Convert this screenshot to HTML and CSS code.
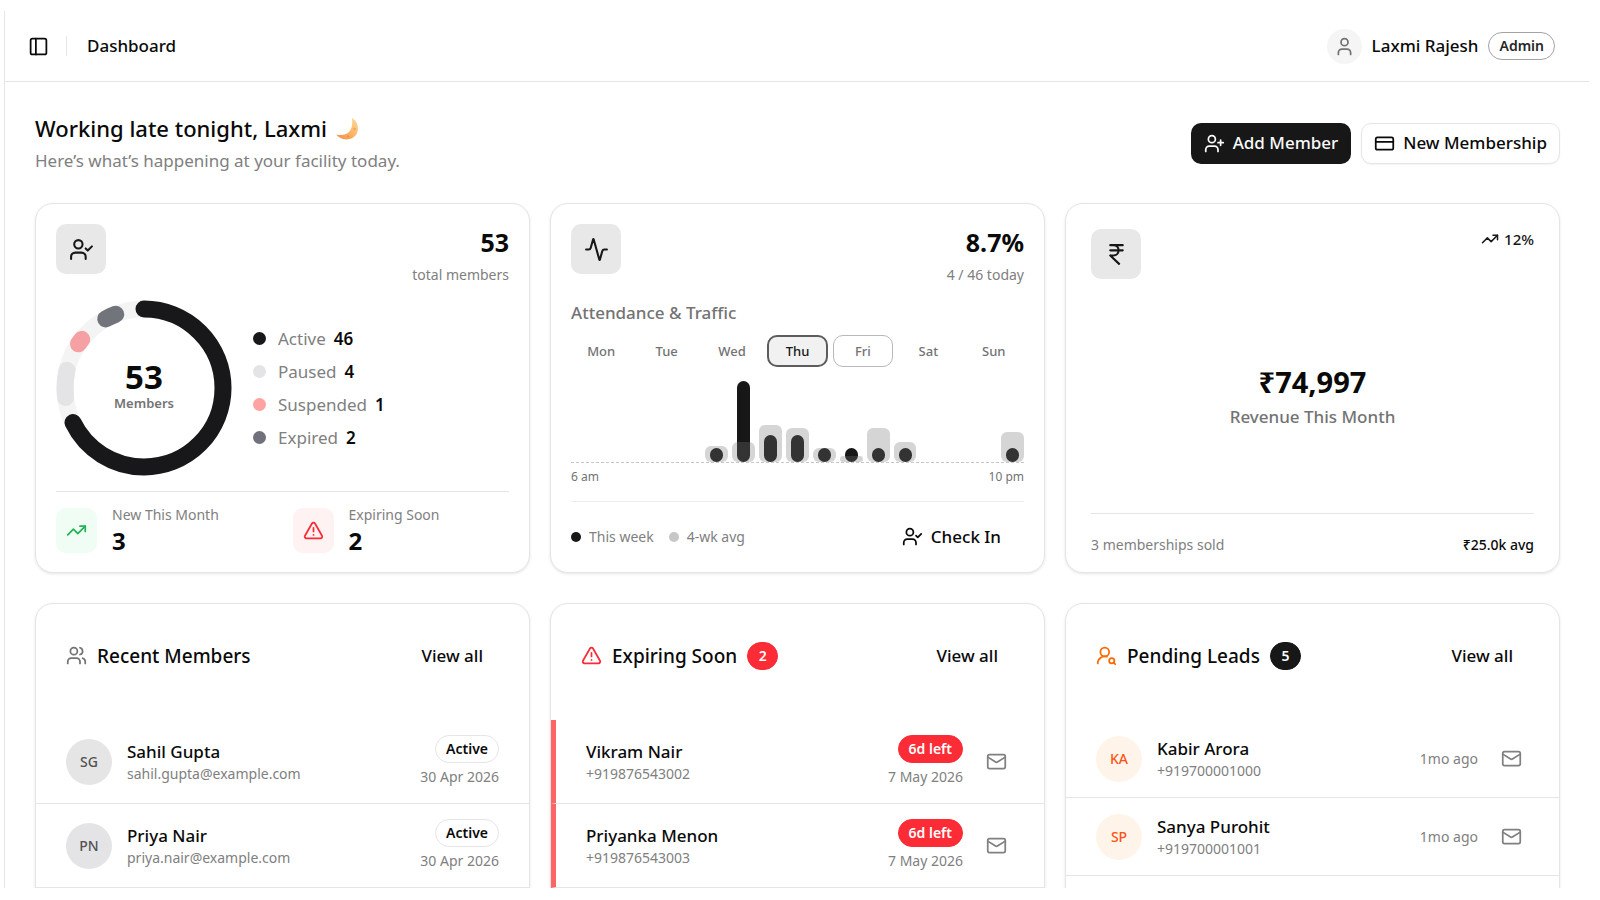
FILE: index.html
```html
<!DOCTYPE html>
<html lang="en">
<head>
    <meta charset="UTF-8">
    <meta name="viewport" content="width=device-width, initial-scale=1.0">
    <title>Dashboard</title>
    <link rel="stylesheet" href="styles.css">
</head>
<body>
    <!-- Icon sprite -->
    <svg class="sprite" aria-hidden="true">
        <symbol id="i-panel" viewBox="0 0 24 24"><rect x="3" y="3" width="18" height="18" rx="2"/><path d="M9 3v18"/></symbol>
        <symbol id="i-user" viewBox="0 0 24 24"><path d="M19 21v-2a4 4 0 0 0-4-4H9a4 4 0 0 0-4 4v2"/><circle cx="12" cy="7" r="4"/></symbol>
        <symbol id="i-user-plus" viewBox="0 0 24 24"><path d="M16 21v-2a4 4 0 0 0-4-4H6a4 4 0 0 0-4 4v2"/><circle cx="9" cy="7" r="4"/><path d="M19 8v6M22 11h-6"/></symbol>
        <symbol id="i-user-check" viewBox="0 0 24 24"><path d="M16 21v-2a4 4 0 0 0-4-4H6a4 4 0 0 0-4 4v2"/><circle cx="9" cy="7" r="4"/><path d="m16 11 2 2 4-4"/></symbol>
        <symbol id="i-user-search" viewBox="0 0 24 24"><circle cx="10" cy="8" r="5"/><path d="M2 21a8 8 0 0 1 10.434-7.62"/><circle cx="18" cy="18" r="3"/><path d="m22 22-1.9-1.9"/></symbol>
        <symbol id="i-users" viewBox="0 0 24 24"><path d="M16 21v-2a4 4 0 0 0-4-4H6a4 4 0 0 0-4 4v2"/><circle cx="9" cy="7" r="4"/><path d="M16 3.128a4 4 0 0 1 0 7.744M22 21v-2a4 4 0 0 0-3-3.87"/></symbol>
        <symbol id="i-card" viewBox="0 0 24 24"><rect x="2" y="5" width="20" height="14" rx="2"/><path d="M2 10h20"/></symbol>
        <symbol id="i-activity" viewBox="0 0 24 24"><path d="M22 12h-2.48a2 2 0 0 0-1.93 1.46l-2.35 8.36a.25.25 0 0 1-.48 0L9.24 2.18a.25.25 0 0 0-.48 0l-2.35 8.36A2 2 0 0 1 4.49 12H2"/></symbol>
        <symbol id="i-rupee" viewBox="0 0 24 24"><path d="M6 3h12M6 8h12M6 13l8.5 8M6 13h3M9 13c6.667 0 6.667-10 0-10"/></symbol>
        <symbol id="i-trend" viewBox="0 0 24 24"><path d="m22 7-8.5 8.5-5-5L2 17"/><path d="M16 7h6v6"/></symbol>
        <symbol id="i-alert" viewBox="0 0 24 24"><path d="m21.73 18-8-14a2 2 0 0 0-3.48 0l-8 14A2 2 0 0 0 4 21h16a2 2 0 0 0 1.73-3"/><path d="M12 9v4M12 17h.01"/></symbol>
        <symbol id="i-mail" viewBox="0 0 24 24"><rect x="2" y="4" width="20" height="16" rx="2"/><path d="m22 7-8.97 5.7a1.94 1.94 0 0 1-2.06 0L2 7"/></symbol>
    </svg>

    <div class="app">
        <header class="topbar">
            <button type="button" class="icon-btn" aria-label="Toggle sidebar"><svg class="icon"><use href="#i-panel"/></svg></button>
            <span class="separator"></span>
            <span class="page-name">Dashboard</span>
            <div class="account">
                <span class="account-avatar"><svg class="icon"><use href="#i-user"/></svg></span>
                <span class="account-name">Laxmi Rajesh</span>
                <span class="badge badge-role">Admin</span>
            </div>
        </header>

        <main>
            <div class="intro">
                <div>
                    <h1>Working late tonight, Laxmi
                        <svg class="moon" viewBox="0 0 24 24" aria-hidden="true">
                            <defs>
                                <linearGradient id="moonFill" x1="0" y1="1" x2="1" y2="0">
                                    <stop offset="0" stop-color="#f08c4a"/>
                                    <stop offset="0.5" stop-color="#fbb565"/>
                                    <stop offset="1" stop-color="#ffdb9a"/>
                                </linearGradient>
                            </defs>
                            <path d="M17 1C22 4 24.500 10 22 16C19 23 8 25.500 1 17.500C7 19 13 17.500 15.500 13C17.500 9.500 17.500 5 17 1Z" fill="url(#moonFill)"/>
                            <circle cx="19.500" cy="12" r="1.300" fill="#f3a45c"/>
                            <circle cx="13" cy="19.500" r="1.200" fill="#ec9350"/>
                        </svg>
                    </h1>
                    <p class="subtitle">Here’s what’s happening at your facility today.</p>
                </div>
                <div class="actions">
                    <button type="button" class="btn btn-primary"><svg class="icon"><use href="#i-user-plus"/></svg>Add Member</button>
                    <button type="button" class="btn btn-outline"><svg class="icon"><use href="#i-card"/></svg>New Membership</button>
                </div>
            </div>

            <div class="grid">
                <!-- Members -->
                <section class="card stat-card">
                    <div class="card-head">
                        <span class="icon-box"><svg class="icon icon-lg"><use href="#i-user-check"/></svg></span>
                        <div class="figure">
                            <strong>53</strong>
                            <span>total members</span>
                        </div>
                    </div>
                    <div class="members">
                        <div class="donut">
                            <svg viewBox="0 0 176 176" aria-hidden="true">
                                <g fill="none" stroke-width="17" stroke-linecap="round" transform="rotate(-90 88 88)">
                                    <circle cx="88" cy="88" r="79" stroke="#f4f4f4"/>
                                    <circle cx="88" cy="88" r="79" stroke="#18181b" pathLength="360" stroke-dasharray="244 360"/>
                                    <circle cx="88" cy="88" r="79" stroke="#e4e4e7" pathLength="360" stroke-dasharray="20 360" stroke-dashoffset="-263"/>
                                    <circle cx="88" cy="88" r="79" stroke="#f5a0a3" pathLength="360" stroke-dasharray="4 360" stroke-dashoffset="-304"/>
                                    <circle cx="88" cy="88" r="79" stroke="#71747b" pathLength="360" stroke-dasharray="8 360" stroke-dashoffset="-331"/>
                                </g>
                            </svg>
                            <div class="donut-label"><strong>53</strong><span>Members</span></div>
                        </div>
                        <ul class="breakdown">
                            <li><i class="dot dot-active"></i>Active <b>46</b></li>
                            <li><i class="dot dot-paused"></i>Paused <b>4</b></li>
                            <li><i class="dot dot-suspended"></i>Suspended <b>1</b></li>
                            <li><i class="dot dot-expired"></i>Expired <b>2</b></li>
                        </ul>
                    </div>
                    <div class="mini-stats">
                        <div class="mini">
                            <span class="mini-icon green"><svg class="icon"><use href="#i-trend"/></svg></span>
                            <div class="mini-text"><span>New This Month</span><strong>3</strong></div>
                        </div>
                        <div class="mini">
                            <span class="mini-icon red"><svg class="icon"><use href="#i-alert"/></svg></span>
                            <div class="mini-text"><span>Expiring Soon</span><strong>2</strong></div>
                        </div>
                    </div>
                </section>

                <!-- Attendance -->
                <section class="card stat-card traffic">
                    <div class="card-head">
                        <span class="icon-box"><svg class="icon icon-lg"><use href="#i-activity"/></svg></span>
                        <div class="figure">
                            <strong>8.7%</strong>
                            <span>4 / 46 today</span>
                        </div>
                    </div>
                    <h2 class="muted-title">Attendance &amp; Traffic</h2>
                    <div class="days">
                        <button type="button">Mon</button>
                        <button type="button">Tue</button>
                        <button type="button">Wed</button>
                        <button type="button" class="selected">Thu</button>
                        <button type="button" class="today">Fri</button>
                        <button type="button">Sat</button>
                        <button type="button">Sun</button>
                    </div>
                    <div class="chart">
                        <div class="hour"></div>
                        <div class="hour"></div>
                        <div class="hour"></div>
                        <div class="hour"></div>
                        <div class="hour"></div>
                        <div class="hour"><i class="now" style="height: 17%"></i><i class="avg" style="height: 20%"></i></div>
                        <div class="hour"><i class="now" style="height: 100%"></i><i class="avg" style="height: 25%"></i></div>
                        <div class="hour"><i class="now" style="height: 33%"></i><i class="avg" style="height: 46%"></i></div>
                        <div class="hour"><i class="now" style="height: 33%"></i><i class="avg" style="height: 42%"></i></div>
                        <div class="hour"><i class="now" style="height: 17%"></i><i class="avg" style="height: 17%"></i></div>
                        <div class="hour"><i class="now" style="height: 17%"></i><i class="avg" style="height: 8%"></i></div>
                        <div class="hour"><i class="now" style="height: 17%"></i><i class="avg" style="height: 42%"></i></div>
                        <div class="hour"><i class="now" style="height: 17%"></i><i class="avg" style="height: 25%"></i></div>
                        <div class="hour"></div>
                        <div class="hour"></div>
                        <div class="hour"></div>
                        <div class="hour"><i class="now" style="height: 17%"></i><i class="avg" style="height: 37%"></i></div>
                    </div>
                    <div class="axis"><span>6 am</span><span>10 pm</span></div>
                    <div class="traffic-foot">
                        <span class="key"><i class="dot dot-now"></i>This week</span>
                        <span class="key"><i class="dot dot-avg"></i>4-wk avg</span>
                        <button type="button" class="btn btn-ghost"><svg class="icon"><use href="#i-user-check"/></svg>Check In</button>
                    </div>
                </section>

                <!-- Revenue -->
                <section class="card stat-card revenue">
                    <div class="card-head">
                        <span class="icon-box"><svg class="icon icon-lg"><use href="#i-rupee"/></svg></span>
                        <span class="growth"><svg class="icon icon-sm"><use href="#i-trend"/></svg>12%</span>
                    </div>
                    <div class="revenue-body">
                        <strong>₹74,997</strong>
                        <h2 class="muted-title">Revenue This Month</h2>
                    </div>
                    <div class="revenue-foot"><span>3 memberships sold</span><b>₹25.0k avg</b></div>
                </section>

                <!-- Recent members -->
                <section class="card list-card">
                    <div class="list-head">
                        <svg class="icon gray"><use href="#i-users"/></svg>
                        <h2>Recent Members</h2>
                        <a href="#">View all</a>
                    </div>
                    <ul class="rows">
                        <li>
                            <span class="avatar">SG</span>
                            <div class="who"><b>Sahil Gupta</b><span>sahil.gupta@example.com</span></div>
                            <div class="status"><span class="badge">Active</span><span>30 Apr 2026</span></div>
                        </li>
                        <li>
                            <span class="avatar avatar-cool">PN</span>
                            <div class="who"><b>Priya Nair</b><span>priya.nair@example.com</span></div>
                            <div class="status"><span class="badge">Active</span><span>30 Apr 2026</span></div>
                        </li>
                    </ul>
                </section>

                <!-- Expiring soon -->
                <section class="card list-card">
                    <div class="list-head">
                        <svg class="icon danger"><use href="#i-alert"/></svg>
                        <h2>Expiring Soon</h2>
                        <span class="badge badge-danger">2</span>
                        <a href="#">View all</a>
                    </div>
                    <ul class="rows rows-danger">
                        <li>
                            <div class="who"><b>Vikram Nair</b><span>+919876543002</span></div>
                            <div class="status"><span class="badge badge-danger">6d left</span><span>7 May 2026</span></div>
                            <button type="button" class="icon-btn mail" aria-label="Email Vikram Nair"><svg class="icon"><use href="#i-mail"/></svg></button>
                        </li>
                        <li>
                            <div class="who"><b>Priyanka Menon</b><span>+919876543003</span></div>
                            <div class="status"><span class="badge badge-danger">6d left</span><span>7 May 2026</span></div>
                            <button type="button" class="icon-btn mail" aria-label="Email Priyanka Menon"><svg class="icon"><use href="#i-mail"/></svg></button>
                        </li>
                    </ul>
                </section>

                <!-- Pending leads -->
                <section class="card list-card">
                    <div class="list-head">
                        <svg class="icon orange"><use href="#i-user-search"/></svg>
                        <h2>Pending Leads</h2>
                        <span class="badge badge-dark">5</span>
                        <a href="#">View all</a>
                    </div>
                    <ul class="rows rows-leads">
                        <li>
                            <span class="avatar avatar-lead">KA</span>
                            <div class="who"><b>Kabir Arora</b><span>+919700001000</span></div>
                            <span class="ago">1mo ago</span>
                            <button type="button" class="icon-btn mail" aria-label="Email Kabir Arora"><svg class="icon"><use href="#i-mail"/></svg></button>
                        </li>
                        <li>
                            <span class="avatar avatar-lead">SP</span>
                            <div class="who"><b>Sanya Purohit</b><span>+919700001001</span></div>
                            <span class="ago">1mo ago</span>
                            <button type="button" class="icon-btn mail" aria-label="Email Sanya Purohit"><svg class="icon"><use href="#i-mail"/></svg></button>
                        </li>
                    </ul>
                </section>
            </div>
        </main>
    </div>
</body>
</html>
```

FILE: styles.css
```css
* {
    box-sizing: border-box;
}
body {
    margin: 0;
    padding: 11px 11px 12px 4px;
    height: 100vh;
    background: #fff;
    color: #0a0a0a;
    font-family: "Noto Sans", "Open Sans", sans-serif;
    font-size: 17px;
    line-height: 26px;
}
h1, h2, p, ul {
    margin: 0;
    padding: 0;
}
ul {
    list-style: none;
}
button {
    font: inherit;
    color: inherit;
    background: none;
    border: none;
    padding: 0;
    cursor: pointer;
}
.sprite {
    display: none;
}
.app {
    height: 100%;
    overflow: hidden;
    border-left: 1px solid #e5e5e5;
}

/* Icons */
.icon {
    display: block;
    flex: none;
    width: 21px;
    height: 21px;
    fill: none;
    stroke: currentColor;
    stroke-width: 2;
    stroke-linecap: round;
    stroke-linejoin: round;
}
.icon-lg {
    width: 25px;
    height: 25px;
}
.icon-sm {
    width: 18px;
    height: 18px;
}
.icon-btn {
    display: flex;
}
.gray {
    color: #737373;
}
.danger {
    color: #fb2c36;
}
.orange {
    color: #ff6900;
}

/* Top bar */
.topbar {
    display: flex;
    align-items: center;
    height: 71px;
    padding: 0 34px 0 23px;
    border-bottom: 1px solid #e5e5e5;
}
.separator {
    width: 1px;
    height: 20px;
    margin: 0 20px 0 17px;
    background: #e5e5e5;
}
.page-name, .account-name {
    font-weight: 500;
}
.account {
    display: flex;
    align-items: center;
    gap: 10px;
    margin-left: auto;
}
.account-avatar {
    display: flex;
    align-items: center;
    justify-content: center;
    width: 35px;
    height: 35px;
    border-radius: 50%;
    background: #f5f5f5;
    color: #737373;
}

/* Badges */
.badge {
    display: inline-flex;
    align-items: center;
    justify-content: center;
    min-width: 31px;
    height: 28px;
    padding: 0 10px;
    border: 1px solid #e5e5e5;
    border-radius: 14px;
    font-size: 14px;
    font-weight: 600;
}
.badge-role {
    border-color: #a3a3a3;
    color: #262626;
}
.badge-danger {
    border-color: #fb2c36;
    background: #fb2c36;
    color: #fff;
}
.badge-dark {
    border-color: #171717;
    background: #171717;
    color: #fff;
}

/* Greeting */
main {
    padding: 30px 29px 0 30px;
}
.intro {
    display: flex;
    align-items: center;
    justify-content: space-between;
    margin-bottom: 29px;
}
h1 {
    display: flex;
    align-items: center;
    gap: 8px;
    margin-bottom: 2px;
    font-size: 22px;
    font-weight: 500;
    line-height: 33px;
}
.moon {
    width: 24px;
    height: 24px;
}
.subtitle {
    color: #808080;
    line-height: 27px;
}
.actions {
    display: flex;
    gap: 10px;
}
.btn {
    display: flex;
    align-items: center;
    gap: 8px;
    height: 41px;
    padding: 0 12px;
    border: 1px solid transparent;
    border-radius: 10px;
    font-weight: 500;
}
.btn-primary {
    background: #171717;
    color: #fafafa;
}
.btn-outline {
    border-color: #e5e5e5;
    box-shadow: 0 1px 2px rgba(0, 0, 0, 0.05);
}

/* Cards */
.grid {
    display: grid;
    grid-template-columns: repeat(3, minmax(0, 1fr));
    gap: 30px 20px;
}
.card {
    display: flex;
    flex-direction: column;
    border: 1px solid #e5e5e5;
    border-radius: 18px;
    background: #fff;
    box-shadow: 0 1px 3px rgba(0, 0, 0, 0.1);
}
.stat-card {
    padding: 20px 20px 17px;
}
.card-head {
    display: flex;
    align-items: flex-start;
    justify-content: space-between;
}
.icon-box {
    display: flex;
    align-items: center;
    justify-content: center;
    width: 50px;
    height: 50px;
    border-radius: 10px;
    background: #e8e8e8;
    color: #171717;
}
.figure {
    text-align: right;
}
.figure strong {
    display: block;
    margin-bottom: 2px;
    font-size: 25px;
    line-height: 36px;
}
.figure span {
    display: block;
    font-size: 14px;
    color: #808080;
}
.muted-title {
    font-size: 17px;
    font-weight: 500;
    color: #737373;
}
.dot {
    flex: none;
    width: 13px;
    height: 13px;
    border-radius: 50%;
}

/* Members card */
.members {
    display: flex;
    align-items: center;
    gap: 21px;
    margin-top: 12px;
}
.donut {
    display: grid;
    place-items: center;
    width: 176px;
    height: 176px;
}
.donut > * {
    grid-area: 1 / 1;
}
.donut-label {
    display: flex;
    flex-direction: column;
    align-items: center;
    padding-bottom: 4px;
}
.donut-label strong {
    font-size: 33px;
    line-height: 34px;
}
.donut-label span {
    font-size: 13px;
    font-weight: 600;
    line-height: 18px;
    color: #737373;
}
.breakdown {
    display: grid;
    gap: 7px;
}
.breakdown li {
    display: flex;
    align-items: center;
    color: #808080;
}
.breakdown .dot {
    margin-right: 12px;
}
.breakdown b {
    margin-left: 8px;
    font-weight: 600;
    color: #0a0a0a;
}
.dot-active, .dot-now {
    background: #18181b;
}
.dot-paused {
    background: #e4e4e7;
}
.dot-suspended {
    background: #ffa2a2;
}
.dot-expired {
    background: #71717b;
}
.dot-avg {
    background: #c7c7c7;
}
.mini-stats {
    display: grid;
    grid-template-columns: 1fr 1fr;
    gap: 20px;
    margin-top: 15px;
    padding-top: 14px;
    border-top: 1px solid #e5e5e5;
}
.mini {
    display: flex;
    align-items: center;
    gap: 15px;
}
.mini-icon {
    display: flex;
    align-items: center;
    justify-content: center;
    width: 41px;
    height: 45px;
    border-radius: 10px;
}
.mini-icon.green {
    background: #f0fdf4;
    color: #22b455;
}
.mini-icon.red {
    background: #fef2f2;
    color: #fb2c36;
}
.mini-text span {
    display: block;
    font-size: 14px;
    line-height: 18px;
    color: #808080;
}
.mini-text strong {
    display: block;
    margin-top: 3px;
    font-size: 24px;
    line-height: 28px;
}

/* Attendance card */
.traffic {
    padding-bottom: 14px;
}
.traffic .muted-title {
    margin-top: 12px;
}
.days {
    display: grid;
    grid-template-columns: repeat(7, 1fr);
    gap: 5px;
    margin-top: 9px;
}
.days button {
    height: 32px;
    border: 1px solid transparent;
    border-radius: 10px;
    font-size: 13px;
    font-weight: 500;
    color: #737373;
}
.days .selected {
    border: 2px solid #5c5c5c;
    background: #f1f1f1;
    color: #171717;
}
.days .today {
    border-color: #b8b8b8;
}
.chart {
    display: grid;
    grid-template-columns: repeat(17, 1fr);
    gap: 4px;
    height: 82px;
    margin-top: 14px;
    border-bottom: 1px dashed #c7c7c7;
}
/* This week's bar and the average share one cell, the average on top */
.hour {
    display: grid;
    grid-template-rows: 100%;
    grid-template-columns: 100%;
    align-items: end;
    justify-items: center;
}
.hour i {
    grid-area: 1 / 1;
}
.now {
    width: 13px;
    border-radius: 7px;
    background: #171717;
}
.avg {
    width: 100%;
    border-radius: 6px;
    background: rgba(115, 115, 115, 0.3);
}
.axis {
    display: flex;
    justify-content: space-between;
    margin-top: 5px;
    font-size: 12px;
    line-height: 18px;
    color: #737373;
}
.traffic-foot {
    display: flex;
    align-items: center;
    gap: 15px;
    margin-top: 15px;
    padding-top: 14px;
    border-top: 1px solid #ececec;
}
.key {
    display: flex;
    align-items: center;
    gap: 8px;
    font-size: 14px;
    color: #808080;
}
.key .dot {
    width: 10px;
    height: 10px;
}
.btn-ghost {
    margin-left: auto;
    padding: 0 22px;
}

/* Revenue card */
.revenue {
    padding: 25px 25px 14px;
}
.growth {
    display: flex;
    align-items: center;
    gap: 5px;
    height: 20px;
    font-size: 15px;
    font-weight: 500;
    color: #171717;
}
.revenue-body {
    display: flex;
    flex: 1;
    flex-direction: column;
    align-items: center;
    justify-content: center;
}
.revenue-body strong {
    margin-bottom: 2px;
    font-size: 29px;
    line-height: 40px;
}
.revenue-foot {
    display: flex;
    justify-content: space-between;
    padding-top: 18px;
    border-top: 1px solid #e5e5e5;
    font-size: 14px;
    color: #808080;
}
.revenue-foot b {
    font-weight: 500;
    color: #0a0a0a;
}

/* List cards */
.list-card {
    overflow: hidden;
    padding-bottom: 30px;
}
.list-head {
    display: flex;
    align-items: center;
    gap: 10px;
    height: 116px;
    padding: 31px 46px 44px 30px;
}
.list-head h2 {
    font-size: 19px;
    font-weight: 500;
}
.list-head a {
    margin-left: auto;
    font-weight: 500;
    color: #0a0a0a;
    text-decoration: none;
}
.rows li {
    display: flex;
    align-items: center;
    gap: 15px;
    padding: 15px 30px;
    border-bottom: 1px solid #e5e5e5;
}
.rows-danger li {
    padding-right: 37px;
    border-left: 5px solid #ff6467;
}
.rows-leads li {
    padding-right: 37px;
}
.avatar {
    display: flex;
    align-items: center;
    justify-content: center;
    width: 46px;
    height: 46px;
    border-radius: 50%;
    background: #e5e5e5;
    font-size: 14px;
    font-weight: 500;
    color: #525252;
}
.avatar-cool {
    background: #e4e4e7;
}
.avatar-lead {
    background: #fff4ea;
    color: #ff5314;
}
.who {
    margin-right: auto;
    padding-top: 3px;
}
.who b, .who span {
    display: block;
    line-height: 22px;
}
.who b {
    font-weight: 500;
}
.who span, .status, .ago {
    font-size: 14px;
    color: #808080;
}
.status {
    display: flex;
    flex-direction: column;
    align-items: flex-end;
    gap: 3px;
    line-height: 22px;
}
.status .badge:not(.badge-danger) {
    color: #0a0a0a;
}
.mail {
    margin-left: 8px;
    color: #808080;
}
```
